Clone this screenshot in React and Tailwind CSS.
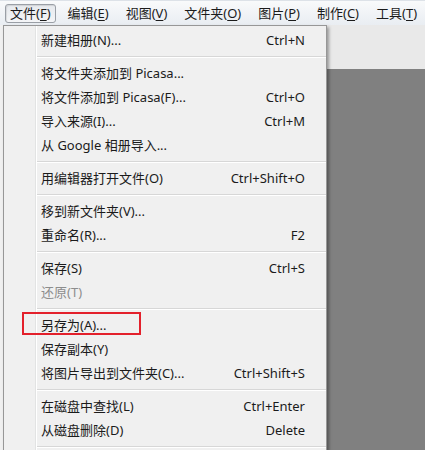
import React from 'react';

const menuBar = [
  { label: '文件', key: 'F', active: true },
  { label: '编辑', key: 'E' },
  { label: '视图', key: 'V' },
  { label: '文件夹', key: 'O' },
  { label: '图片', key: 'P' },
  { label: '制作', key: 'C' },
  { label: '工具', key: 'T' },
];

const entries = [
  { label: '新建相册(N)...', shortcut: 'Ctrl+N' },
  'sep',
  { label: '将文件夹添加到 Picasa...' },
  { label: '将文件添加到 Picasa(F)...', shortcut: 'Ctrl+O' },
  { label: '导入来源(I)...', shortcut: 'Ctrl+M' },
  { label: '从 Google 相册导入...' },
  'sep',
  { label: '用编辑器打开文件(O)', shortcut: 'Ctrl+Shift+O' },
  'sep',
  { label: '移到新文件夹(V)...' },
  { label: '重命名(R)...', shortcut: 'F2' },
  'sep',
  { label: '保存(S)', shortcut: 'Ctrl+S' },
  { label: '还原(T)', disabled: true },
  'sep',
  { label: '另存为(A)...', marked: true },
  { label: '保存副本(Y)' },
  { label: '将图片导出到文件夹(C)...', shortcut: 'Ctrl+Shift+S' },
  'sep',
  { label: '在磁盘中查找(L)', shortcut: 'Ctrl+Enter' },
  { label: '从磁盘删除(D)', shortcut: 'Delete' },
  'sep',
];

function MenuBarItem({ item }) {
  return (
    <div
      className={
        'flex h-[19px] items-center rounded-[3px] px-[4px] ' +
        (item.active
          ? 'border border-[#9a9fa6] bg-gradient-to-b from-[#e6e9ed] to-[#f4f5f7] shadow-[inset_1px_1px_1px_rgba(0,0,0,0.1)]'
          : 'border border-transparent')
      }
    >
      {item.label}(<span className="underline underline-offset-2">{item.key}</span>)
    </div>
  );
}

function Separator() {
  return (
    <div className="h-[9px] pt-[4px]">
      <div className="h-px bg-[#d7d7d7]" />
      <div className="h-px bg-white" />
    </div>
  );
}

function MenuItem({ item }) {
  return (
    <div
      className={
        'relative flex h-[24px] items-center justify-between pl-[4px] pr-[21px] ' +
        (item.disabled ? 'text-[#8d8d8d]' : 'text-[#1b1b1b]')
      }
    >
      <span>{item.label}</span>
      {item.shortcut && <span>{item.shortcut}</span>}
      {item.marked && (
        <div className="absolute left-[-15px] top-[-1px] h-[23px] w-[119px] border-2 border-[#e3202b]" />
      )}
    </div>
  );
}

export default function App() {
  return (
    <div className="h-[450px] w-[425px] overflow-hidden bg-[#f0f0f0] font-['Noto_Sans','Noto_Sans_CJK_SC',sans-serif] text-[13px] leading-none text-[#1b1b1b]">
      <div className="flex h-[25px] items-center gap-[7px] border-t border-[#dde2e8] bg-gradient-to-b from-[#f9fafb] to-[#e9edf2] pl-[5px]">
        {menuBar.map((item) => (
          <MenuBarItem key={item.key} item={item} />
        ))}
      </div>

      <div className="flex h-[425px]">
        <div className="w-[3px] shrink-0 bg-[#f0f0f0]" />

        <div className="relative z-10 flex w-[324px] shrink-0 border border-b-0 border-[#979797] bg-[#f0f0f0] shadow-[2px_2px_3px_rgba(0,0,0,0.35)]">
          <div className="w-[32px] shrink-0 border-r border-[#e2e3e3]" />
          <div className="flex-1 border-l border-white pt-[2px]">
            {entries.map((item, i) =>
              item === 'sep' ? <Separator key={i} /> : <MenuItem key={i} item={item} />
            )}
          </div>
        </div>

        <div className="flex flex-1 flex-col">
          <div className="h-[44px] bg-[#e9e9e9]" />
          <div className="flex-1 bg-[#808080]" />
        </div>
      </div>
    </div>
  );
}
